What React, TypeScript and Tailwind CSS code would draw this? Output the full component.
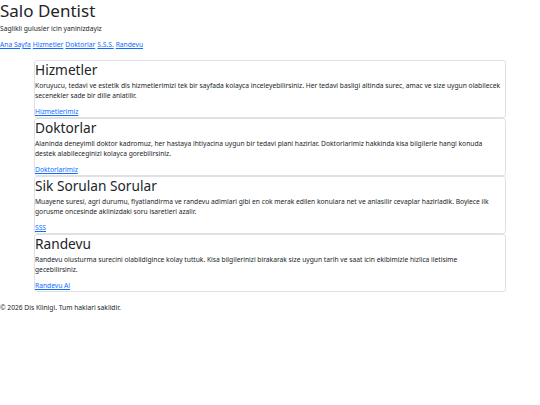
import { Fragment } from "react";

export default function App() {
  const cards = [
    {
      t: "Hizmetler",
      p: [
        "Koruyucu, tedavi ve estetik dis hizmetlerimizi tek bir sayfada kolayca inceleyebilirsiniz. Her tedavi basligi altinda surec, amac ve size uygun olabilecek",
        "secenekler sade bir dille anlatilir.",
      ],
      l: "Hizmetlerimiz",
    },
    {
      t: "Doktorlar",
      p: [
        "Alaninda deneyimli doktor kadromuz, her hastaya ihtiyacina uygun bir tedavi plani hazirlar. Doktorlarimiz hakkinda kisa bilgilerle hangi konuda",
        "destek alabileceginizi kolayca gorebilirsiniz.",
      ],
      l: "Doktorlarimiz",
    },
    {
      t: "Sik Sorulan Sorular",
      p: [
        "Muayene suresi, agri durumu, fiyatlandirma ve randevu adimlari gibi en cok merak edilen konulara net ve anlasilir cevaplar hazirladik. Boylece ilk",
        "gorusme oncesinde aklinizdaki soru isaretleri azalir.",
      ],
      l: "SSS",
    },
    {
      t: "Randevu",
      p: [
        "Randevu olusturma surecini olabildigince kolay tuttuk. Kisa bilgilerinizi birakarak size uygun tarih ve saat icin ekibimizle hizlica iletisime",
        "gecebilirsiniz.",
      ],
      l: "Randevu Al",
    },
  ];
  return (
    <div className="w-[540px] min-h-[405px] bg-white text-[#212529] font-['Noto_Sans',sans-serif] text-[6.7px] leading-[10px]">
      <header>
        <h1 className="text-[17px] leading-[22px] font-normal">Salo Dentist</h1>
        <p className="mt-[2px]">Saglikli gulusler icin yaninizdayiz</p>
        <nav className="mt-[6px] flex gap-[2px]">
          {["Ana Sayfa", "Hizmetler", "Doktorlar", "S.S.S.", "Randevu"].map((n) => (
            <a key={n} href="#" className="text-[#0d6efd] underline">
              {n}
            </a>
          ))}
        </nav>
      </header>
      <main className="mx-[34px] mt-[10px]">
        {cards.map((c) => (
          <section key={c.t} className="border border-[#dee2e6] rounded-[3px]">
            <h2 className="text-[13.7px] leading-[17px] font-normal">{c.t}</h2>
            <p className="mt-[3px] mb-[6px]">
              {c.p.map((line, i) => (
                <Fragment key={i}>
                  {i > 0 && <br />}
                  {line}
                </Fragment>
              ))}
            </p>
            <a href="#" className="text-[#0d6efd] underline">
              {c.l}
            </a>
          </section>
        ))}
      </main>
      <footer className="mt-[11px]">© 2026 Dis Klinigi. Tum haklari saklidir.</footer>
    </div>
  );
}
